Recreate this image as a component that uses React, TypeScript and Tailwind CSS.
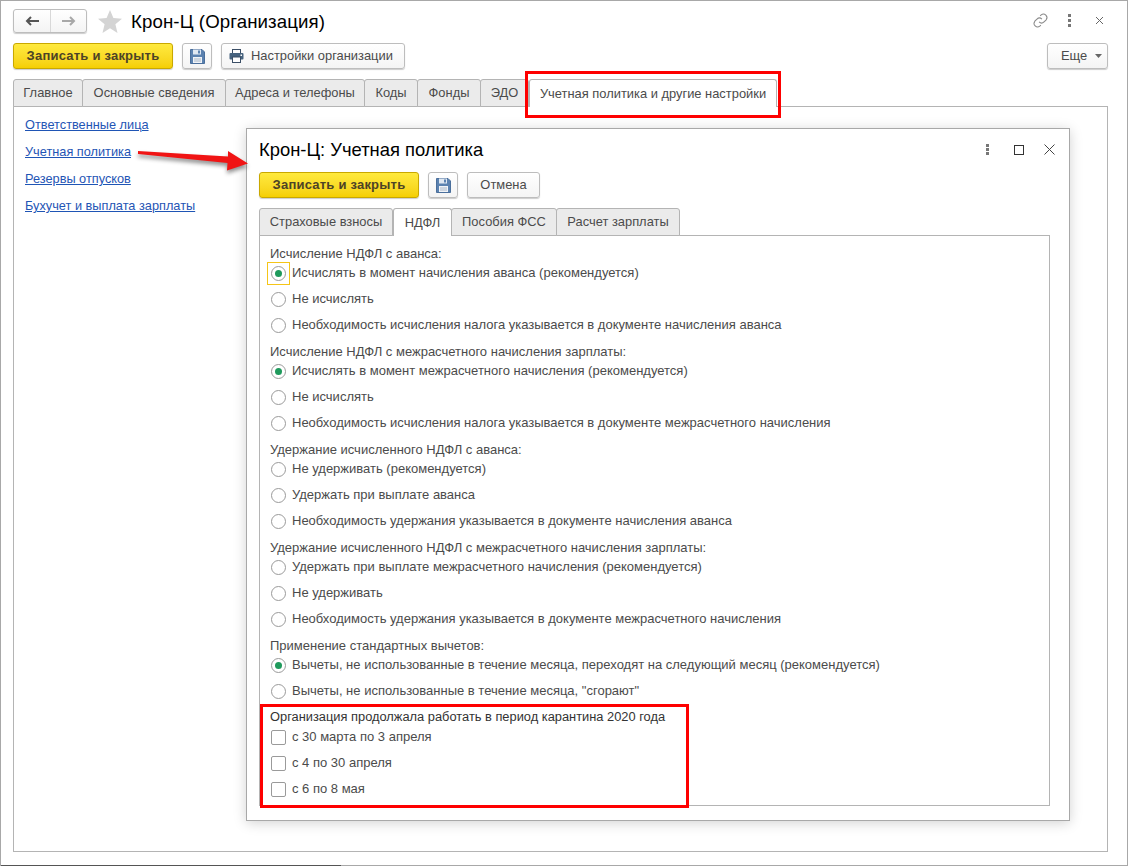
function Floppy() {
  return (
    <svg width="15" height="16" viewBox="0 0 15 16">
      <path d="M0.5 1.5h11.5l2.5 2.5v11.5h-14z" fill="#5b82b0" stroke="#4a6f9c" />
      <rect x="3" y="1.5" width="8" height="5" fill="#dfe8f2" />
      <rect x="8" y="2.5" width="2" height="3" fill="#5b82b0" />
      <rect x="3" y="9" width="9" height="6" fill="#f0f3f7" />
      <path d="M4 11h7M4 13h7" stroke="#a9b8c9" />
    </svg>
  );
}

function Printer() {
  return (
    <svg width="15" height="14" viewBox="0 0 15 14">
      <rect x="3.5" y="0.5" width="8" height="4" fill="#fff" stroke="#3b4f66" />
      <rect x="0.5" y="4" width="14" height="6.5" rx="1" fill="#47637f" />
      <rect x="3.5" y="8" width="8" height="5.5" fill="#fff" stroke="#3b4f66" />
      <rect x="11.5" y="5.5" width="1.5" height="1.5" fill="#fff" />
    </svg>
  );
}

function YellowButton() {
  return (
    <button className="h-[26px] w-[160px] rounded-[3px] border border-[#c9a800] bg-gradient-to-b from-[#ffea3d] to-[#f5cf00] text-[13px] font-bold tracking-[0.22px] text-[#4d4326] shadow-[0_1px_1px_rgba(0,0,0,0.2)]">
      Записать и закрыть
    </button>
  );
}

function GrayButton({ className, children }: { className: string; children: React.ReactNode }) {
  return (
    <button className={`flex h-[26px] items-center whitespace-nowrap rounded-[3px] border border-[#bdbdbd] bg-gradient-to-b from-white to-[#f4f4f4] text-[12.9px] text-[#4b4b4b] shadow-[0_1px_1px_rgba(0,0,0,0.2)] ${className}`}>
      {children}
    </button>
  );
}

function Tab({ width, active, children }: { width: string; active?: boolean; children: React.ReactNode }) {
  return (
    <div
      className={`flex h-[28px] shrink-0 items-center justify-center whitespace-nowrap rounded-t-[3px] border border-[#b4b4b4] text-[12.9px] text-[#4b4b4b] ${width} ${
        active ? 'z-10 border-b-0 bg-white' : 'ml-[-1px] bg-[#ebebeb]'
      }`}
    >
      {children}
    </div>
  );
}

function GroupLabel({ children, top }: { children: React.ReactNode; top: string }) {
  return <div className={`ml-[3px] h-[14px] text-[13px] leading-[16px] text-[#4b4b4b] ${top}`}>{children}</div>;
}

function Radio({ label, checked, focused }: { label: string; checked?: boolean; focused?: boolean }) {
  return (
    <div className="flex h-[26px] items-center text-[13px] text-[#4b4b4b]">
      <span className={`mr-[2px] flex h-[23px] w-[23px] shrink-0 items-center justify-center border ${focused ? 'border-[#f5c518]' : 'border-transparent'}`}>
        <span className="flex h-[15px] w-[15px] items-center justify-center rounded-full border border-[#9a9a9a] bg-white">
          {checked && <span className="h-[7px] w-[7px] rounded-full bg-[#1f9a5c]" />}
        </span>
      </span>
      {label}
    </div>
  );
}

function Check({ label }: { label: string }) {
  return (
    <div className="flex h-[26px] items-center text-[13px] text-[#4b4b4b]">
      <span className="ml-[4px] mr-[6px] h-[15px] w-[15px] shrink-0 rounded-[2px] border border-[#9a9a9a] bg-white" />
      {label}
    </div>
  );
}

function RedBox({ className }: { className: string }) {
  return <div className={`absolute z-30 border-[3px] border-[#fe0000] ${className}`} />;
}

export default function App() {
  return (
    <div className="relative h-[866px] w-[1128px] overflow-hidden border-t border-l border-r border-[#a8a8a8] bg-white font-['Liberation_Sans',Arial,sans-serif]">
      {/* Header */}
      <div className="flex h-[42px] items-start pl-[12px] pr-[23px] pt-[8px]">
        <div className="flex h-[24px] w-[74px] rounded-[3px] border border-[#bdbdbd] bg-gradient-to-b from-white to-[#f4f4f4] shadow-[0_1px_1px_rgba(0,0,0,0.2)]">
          <div className="flex w-[37px] items-center justify-center border-r border-[#d8d8d8]">
            <svg width="15" height="10" viewBox="0 0 15 10">
              <path d="M14 5H3M6 1L2 5l4 4" fill="none" stroke="#555" strokeWidth="2" />
            </svg>
          </div>
          <div className="flex flex-1 items-center justify-center">
            <svg width="15" height="10" viewBox="0 0 15 10">
              <path d="M1 5h11M9 1l4 4-4 4" fill="none" stroke="#a8a8a8" strokeWidth="2" />
            </svg>
          </div>
        </div>
        <svg className="ml-[11px] mt-[1px]" width="24" height="23" viewBox="0 0 24 23">
          <path d="M12 0l3.4 8 8.6.7-6.6 5.6 2.1 8.7L12 18.300l-7.500 4.700 2.100-8.700L0 8.700 8.600 8z" fill="#d4d4d4" />
        </svg>
        <div className="ml-[9px] text-[18.67px] leading-[26px] tracking-[0.1px] text-black">Крон-Ц (Организация)</div>
        <div className="ml-auto mt-[3px] flex items-center">
          <svg width="17" height="17" viewBox="0 0 24 24" fill="none" stroke="#8a8a8a" strokeWidth="1.500">
            <path d="M10 14a5 5 0 0 0 7 0l3-3a5 5 0 0 0-7-7l-1.500 1.500" />
            <path d="M14 10a5 5 0 0 0-7 0l-3 3a5 5 0 0 0 7 7l1.500-1.500" />
          </svg>
          <svg className="ml-[19px]" width="3" height="13" viewBox="0 0 3 13" fill="#777">
            <rect width="3" height="3" />
            <rect y="5" width="3" height="3" />
            <rect y="10" width="3" height="3" />
          </svg>
          <svg className="ml-[24px]" width="9" height="9" viewBox="0 0 9 9" stroke="#666">
            <path d="M1 1l7 7M8 1L1 8" />
          </svg>
        </div>
      </div>

      {/* Command bar */}
      <div className="flex items-start pl-[12px] pr-[19px]">
        <YellowButton />
        <GrayButton className="ml-[9px] w-[30px] justify-center">
          <Floppy />
        </GrayButton>
        <GrayButton className="ml-[9px] w-[184px] pl-[7px]">
          <Printer />
          <span className="ml-[7px]">Настройки организации</span>
        </GrayButton>
        <GrayButton className="ml-auto w-[61px] pl-[13px]">
          Еще
          <svg className="ml-[8px]" width="7" height="4" viewBox="0 0 7 4">
            <path d="M0 0h7L3.500 4z" fill="#666" />
          </svg>
        </GrayButton>
      </div>

      {/* Tabs */}
      <div className="mt-[10px] flex pl-[12px]">
        <Tab width="w-[70px] !ml-0">Главное</Tab>
        <Tab width="w-[144px]">Основные сведения</Tab>
        <Tab width="w-[140px]">Адреса и телефоны</Tab>
        <Tab width="w-[54px]">Коды</Tab>
        <Tab width="w-[64px]">Фонды</Tab>
        <Tab width="w-[49px]">ЭДО</Tab>
        <Tab width="w-[248px]" active>
          Учетная политика и другие настройки
        </Tab>
      </div>

      {/* Main panel */}
      <div className="ml-[12px] mt-[-1px] h-[746px] w-[1095px] border border-[#b4b4b4] px-[11px] pt-[4px]">
        <div className="flex flex-col text-[12.75px] leading-[27px] text-[#1f55b5] underline">
          <span>Ответственные лица</span>
          <span>Учетная политика</span>
          <span>Резервы отпусков</span>
          <span>Бухучет и выплата зарплаты</span>
        </div>
      </div>

      {/* Dialog window */}
      <div className="absolute left-[245px] top-[127px] z-20 h-[693px] w-[824px] border border-[#a8a8a8] bg-white px-[12px] shadow-[0_2px_12px_rgba(0,0,0,0.18)]">
        <div className="flex h-[43px] items-center justify-between pb-[2px] pr-[2px]">
          <div className="text-[18.4px] text-black">Крон-Ц: Учетная политика</div>
          <div className="flex items-center">
            <svg width="3" height="11" viewBox="0 0 3 11" fill="#777">
              <rect width="3" height="3" />
              <rect y="4" width="3" height="3" />
              <rect y="8" width="3" height="3" />
            </svg>
            <span className="ml-[25px] h-[10px] w-[10px] border border-[#333]" />
            <svg className="ml-[20px]" width="11" height="11" viewBox="0 0 11 11" stroke="#444">
              <path d="M0.500 0.500l10 10M10.500 0.500l-10 10" />
            </svg>
          </div>
        </div>
        <div className="flex">
          <YellowButton />
          <GrayButton className="ml-[9px] w-[30px] justify-center">
            <Floppy />
          </GrayButton>
          <GrayButton className="ml-[9px] w-[73px] justify-center">Отмена</GrayButton>
        </div>
        <div className="mt-[10px] flex">
          <Tab width="w-[134px] !ml-0">Страховые взносы</Tab>
          <Tab width="w-[59px]" active>
            НДФЛ
          </Tab>
          <Tab width="w-[106px]">Пособия ФСС</Tab>
          <Tab width="w-[124px]">Расчет зарплаты</Tab>
        </div>
        <div className="mt-[-1px] h-[571px] w-[791px] border border-[#b4b4b4] pl-[7px] pt-[10px]">
          <GroupLabel top="">Исчисление НДФЛ с аванса:</GroupLabel>
          <Radio label="Исчислять в момент начисления аванса (рекомендуется)" checked focused />
          <Radio label="Не исчислять" />
          <Radio label="Необходимость исчисления налога указывается в документе начисления аванса" />
          <GroupLabel top="mt-[6px]">Исчисление НДФЛ с межрасчетного начисления зарплаты:</GroupLabel>
          <Radio label="Исчислять в момент межрасчетного начисления (рекомендуется)" checked />
          <Radio label="Не исчислять" />
          <Radio label="Необходимость исчисления налога указывается в документе межрасчетного начисления" />
          <GroupLabel top="mt-[6px]">Удержание исчисленного НДФЛ с аванса:</GroupLabel>
          <Radio label="Не удерживать (рекомендуется)" />
          <Radio label="Удержать при выплате аванса" />
          <Radio label="Необходимость удержания указывается в документе начисления аванса" />
          <GroupLabel top="mt-[6px]">Удержание исчисленного НДФЛ с межрасчетного начисления зарплаты:</GroupLabel>
          <Radio label="Удержать при выплате межрасчетного начисления (рекомендуется)" />
          <Radio label="Не удерживать" />
          <Radio label="Необходимость удержания указывается в документе межрасчетного начисления" />
          <GroupLabel top="mt-[6px]">Применение стандартных вычетов:</GroupLabel>
          <Radio label="Вычеты, не использованные в течение месяца, переходят на следующий месяц (рекомендуется)" checked />
          <Radio label='Вычеты, не использованные в течение месяца, "сгорают"' />
          <div className="ml-[3px] mt-[5px] h-[15px] text-[12.85px] leading-[16px] text-[#333]">
            Организация продолжала работать в период карантина 2020 года
          </div>
          <Check label="с 30 марта по 3 апреля" />
          <Check label="с 4 по 30 апреля" />
          <Check label="с 6 по 8 мая" />
        </div>
      </div>

      {/* Annotations */}
      <RedBox className="left-[524px] top-[70px] h-[47px] w-[256px]" />
      <RedBox className="left-[259px] top-[703px] h-[104px] w-[429px]" />
      <svg className="absolute left-0 top-0 z-30" width="300" height="190" viewBox="0 0 300 190" style={{ filter: 'drop-shadow(0 3px 2px rgba(0,0,0,0.45))' }}>
        <path d="M137 150l90 5.500L227 150l20 12.500-21 7 .5-7.500L137 153z" fill="#f01414" />
      </svg>

      <div className="absolute bottom-0 left-0 h-px w-[340px] bg-[#555]" />
      <div className="absolute bottom-0 left-[340px] right-0 h-px bg-[#a8a8a8]" />
    </div>
  );
}
